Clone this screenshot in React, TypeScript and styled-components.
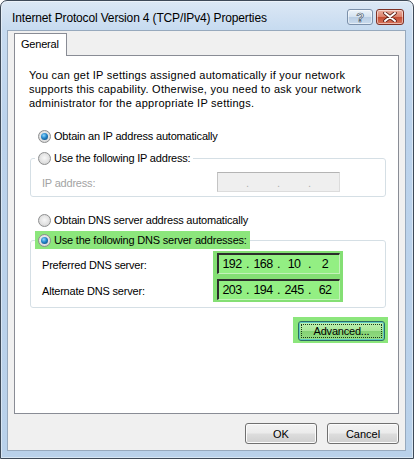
import styled, { createGlobalStyle } from 'styled-components'

const GlobalStyle = createGlobalStyle`
  html, body {
    margin: 0;
    padding: 0;
    background: #ffffff;
  }
  body {
    font-family: "Liberation Sans", Arial, sans-serif;
    font-size: 11px;
    letter-spacing: -0.2px;
    color: #000000;
  }
`

const GREEN = '#8ce67c'

export default function App() {
  return (
    <Window>
      <GlobalStyle />
      <TitleBar>
        <Title>Internet Protocol Version 4 (TCP/IPv4) Properties</Title>
        <CaptionButtons>
          <CaptionButton $variant="help">
            <HelpGlyph>?</HelpGlyph>
          </CaptionButton>
          <CaptionButton $variant="close">
            <svg width="14" height="10" viewBox="0 0 14 10">
              <path
                d="M2 1 L12 9 M12 1 L2 9"
                stroke="#5a2018"
                strokeWidth="3.6"
                strokeLinecap="round"
              />
              <path
                d="M2 1 L12 9 M12 1 L2 9"
                stroke="#ffffff"
                strokeWidth="2"
                strokeLinecap="round"
              />
            </svg>
          </CaptionButton>
        </CaptionButtons>
      </TitleBar>

      <Client>
        <Tab>General</Tab>
        <Panel>
          <Intro>
            You can get IP settings assigned automatically if your network
            <br />
            supports this capability. Otherwise, you need to ask your network
            <br />
            administrator for the appropriate IP settings.
          </Intro>

          <StandaloneOption $top={17}>
            <Radio $checked />
            <span>Obtain an IP address automatically</span>
          </StandaloneOption>

          <Group $top={4}>
            <Legend>
              <OptionRow>
                <Radio />
                <span>Use the following IP address:</span>
              </OptionRow>
            </Legend>
            <IpBody>
              <FieldLabel $disabled>IP address:</FieldLabel>
              <DisabledBox>
                <Octet />
                <Dot>.</Dot>
                <Octet />
                <Dot>.</Dot>
                <Octet />
                <Dot>.</Dot>
                <Octet />
              </DisabledBox>
            </IpBody>
          </Group>

          <StandaloneOption $top={14}>
            <Radio />
            <span>Obtain DNS server address automatically</span>
          </StandaloneOption>

          <Group $top={2}>
            <Legend>
              <OptionRow $highlight>
                <Radio $checked />
                <span>Use the following DNS server addresses:</span>
              </OptionRow>
            </Legend>
            <DnsBody>
              <LabelColumn>
                <FieldLabel>Preferred DNS server:</FieldLabel>
                <FieldLabel>Alternate DNS server:</FieldLabel>
              </LabelColumn>
              <DnsHighlight>
                <IpInput>
                  <Octet>192</Octet>
                  <Dot>.</Dot>
                  <Octet>168</Octet>
                  <Dot>.</Dot>
                  <Octet>10</Octet>
                  <Dot>.</Dot>
                  <Octet>2</Octet>
                </IpInput>
                <IpInput>
                  <Octet>203</Octet>
                  <Dot>.</Dot>
                  <Octet>194</Octet>
                  <Dot>.</Dot>
                  <Octet>245</Octet>
                  <Dot>.</Dot>
                  <Octet>62</Octet>
                </IpInput>
              </DnsHighlight>
            </DnsBody>
          </Group>

          <AdvancedRow>
            <AdvancedHighlight>
              <AdvancedButton>Advanced...</AdvancedButton>
            </AdvancedHighlight>
          </AdvancedRow>
        </Panel>

        <DialogButtons>
          <DialogButton>OK</DialogButton>
          <DialogButton>Cancel</DialogButton>
        </DialogButtons>
      </Client>
    </Window>
  )
}

const Window = styled.div`
  width: 414px;
  height: 459px;
  box-sizing: border-box;
  border: 1px solid #3e4a58;
  border-radius: 7px 7px 0 0;
  background: linear-gradient(180deg, #dce8f5 0px, #c7dbf0 28px, #bcd3ec 120px, #b9d1ea 100%);
  box-shadow: inset 0 0 0 1px rgba(255, 255, 255, 0.45);
  display: flex;
  flex-direction: column;
  overflow: hidden;
`

const TitleBar = styled.div`
  height: 29px;
  flex-shrink: 0;
  box-sizing: border-box;
  padding: 8px 9px 0 11px;
  display: flex;
  align-items: flex-start;
`

const Title = styled.div`
  flex: 1;
  font-size: 12px;
  line-height: 16px;
  letter-spacing: -0.15px;
  padding-top: 1px;
  color: #000000;
  white-space: nowrap;
`

const CaptionButtons = styled.div`
  display: flex;
  gap: 3px;
`

const CaptionButton = styled.div<{ $variant: 'help' | 'close' }>`
  width: ${(p) => (p.$variant === 'help' ? 26 : 28)}px;
  height: 16px;
  box-sizing: border-box;
  border-radius: 3px;
  display: flex;
  align-items: center;
  justify-content: center;
  border: 1px solid ${(p) => (p.$variant === 'help' ? '#7b90aa' : '#7e3226')};
  background: ${(p) =>
    p.$variant === 'help'
      ? 'linear-gradient(180deg, #eef4fa 0%, #d4e2f0 48%, #b9cde3 52%, #cadcee 100%)'
      : 'linear-gradient(180deg, #eab0a2 0%, #dc826c 48%, #c44c33 52%, #d7765e 100%)'};
  box-shadow: inset 0 0 0 1px rgba(255, 255, 255, 0.5);
`

const HelpGlyph = styled.span`
  font-family: "Liberation Sans", Arial, sans-serif;
  font-weight: bold;
  font-size: 13px;
  line-height: 13px;
  color: #ffffff;
  -webkit-text-stroke: 0.7px #4a5a6e;
`

const Client = styled.div`
  flex: 1;
  margin: 0 7px 7px 6px;
  background: #f0f0f0;
  border: 1px solid #97a9bd;
  padding: 2px 6px 6px 6px;
  display: flex;
  flex-direction: column;
`

const Tab = styled.div`
  align-self: flex-start;
  height: 23px;
  box-sizing: border-box;
  padding: 0 7px 0 6px;
  line-height: 21px;
  border: 1px solid #898c95;
  border-bottom: none;
  background: #ffffff;
  margin-bottom: -1px;
  position: relative;
  z-index: 1;
`

const Panel = styled.div`
  flex: 1;
  border: 1px solid #898c95;
  background: #ffffff;
  padding: 12px 12px 0 15px;
  display: flex;
  flex-direction: column;
`

const Intro = styled.p`
  margin: 0 0 0 -1px;
  line-height: 14px;
  letter-spacing: 0.25px;
  white-space: nowrap;
`

const OptionRow = styled.div<{ $highlight?: boolean }>`
  display: flex;
  align-items: center;
  gap: 3px;
  height: 18px;
  padding: 0 3px;
  background: ${(p) => (p.$highlight ? GREEN : 'transparent')};
  white-space: nowrap;
`

const StandaloneOption = styled(OptionRow)<{ $top: number }>`
  margin: ${(p) => p.$top}px 0 0 5px;
  align-self: flex-start;
`

const Radio = styled.span<{ $checked?: boolean }>`
  width: 13px;
  height: 13px;
  flex-shrink: 0;
  box-sizing: border-box;
  border-radius: 50%;
  border: 1px solid #8d8e8f;
  background: radial-gradient(circle at 50% 45%, #f7f7f7 0%, #e2e2e2 55%, #c8c8c8 100%);
  display: flex;
  align-items: center;
  justify-content: center;

  &::after {
    content: '';
    display: ${(p) => (p.$checked ? 'block' : 'none')};
    width: 7px;
    height: 7px;
    border-radius: 50%;
    background: radial-gradient(circle at 40% 35%, #8fd8ff 0%, #2384c8 45%, #0b3d6c 100%);
  }
`

const Group = styled.fieldset<{ $top: number }>`
  margin: ${(p) => p.$top}px 0 0 0;
  padding: 0;
  min-width: 0;
  border: 1px solid #d5dfe5;
  border-radius: 3px;
`

const Legend = styled.legend`
  padding: 0;
  margin-left: 4px;
`

const IpBody = styled.div`
  display: grid;
  grid-template-columns: 175px 123px;
  align-items: center;
  padding: 4px 0 4px 11px;
`

const FieldLabel = styled.div<{ $disabled?: boolean }>`
  color: ${(p) => (p.$disabled ? '#a3a3a3' : '#000000')};
  height: 21px;
  box-sizing: border-box;
  padding-top: 3px;
  display: flex;
  align-items: center;
  white-space: nowrap;
`

const DisabledBox = styled.div`
  height: 20px;
  box-sizing: border-box;
  border: 1px solid #dcdcdc;
  border-top-color: #b4b4b4;
  border-left-color: #c4c4c4;
  background: #efefef;
  color: #b0b0b0;
  display: flex;
  align-items: center;
  padding: 2px 1px 0 1px;
`

const Octet = styled.span`
  flex: 1;
  text-align: center;
`

const Dot = styled.span`
  width: 5px;
  text-align: center;
`

const DnsBody = styled.div`
  display: flex;
  padding: 2px 0 5px 11px;
`

const LabelColumn = styled.div`
  width: 171px;
  display: flex;
  flex-direction: column;
  gap: 5px;
  padding-top: 2px;
`

const DnsHighlight = styled.div`
  background: #84df74;
  padding: 2px 3px 2px 4px;
  display: flex;
  flex-direction: column;
  gap: 5px;
`

const IpInput = styled.div`
  width: 123px;
  height: 21px;
  box-sizing: border-box;
  border: 1px solid #c4f2ba;
  border-top: 2px solid #2c2c2c;
  border-left: 2px solid #2c2c2c;
  background: #93ef83;
  font-size: 12.5px;
  letter-spacing: -0.6px;
  display: flex;
  align-items: center;
  padding: 0 1px 0 0;
`

const AdvancedRow = styled.div`
  display: flex;
  justify-content: flex-end;
  margin: 9px -2px 0 0;
`

const AdvancedHighlight = styled.div`
  background: ${GREEN};
  padding: 4px 3px 2px 5px;
`

const AdvancedButton = styled.button`
  width: 87px;
  height: 20px;
  padding: 0;
  font-family: inherit;
  font-size: 11px;
  letter-spacing: inherit;
  color: #000000;
  border: 1px solid #2c6b66;
  border-radius: 3px;
  background: linear-gradient(180deg, #c2f2b4 0%, #a8e698 48%, #84d274 52%, #96de86 100%);
  box-shadow: inset 0 0 0 1px #5fc9c0;
  outline: 1px dotted #1a3a1a;
  outline-offset: -4px;
`

const DialogButtons = styled.div`
  display: flex;
  justify-content: flex-end;
  gap: 10px;
  margin-top: 9px;
`

const DialogButton = styled.button`
  width: 72px;
  height: 21px;
  padding: 0;
  font-family: inherit;
  font-size: 11px;
  color: #000000;
  border: 1px solid #707070;
  border-radius: 3px;
  background: linear-gradient(180deg, #f3f3f3 0%, #ebebeb 48%, #dddddd 52%, #cfcfcf 100%);
  box-shadow: inset 0 0 0 1px #fbfbfb;
`
